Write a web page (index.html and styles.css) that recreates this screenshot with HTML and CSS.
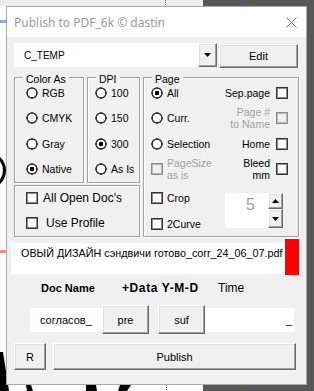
FILE: index.html
```html
<!DOCTYPE html>
<html>
	<head>
		<meta charset="utf-8">
		<title>Publish to PDF_6k</title>
		<link rel="stylesheet" href="styles.css">
	</head>
	<body>
		<div class="desk">
			<!-- what lies behind the dialog -->
			<svg class="backdrop" width="314" height="391">
				<rect width="314" height="391" fill="#fdfdfd"/>
				<rect x="0" y="0" width="203" height="6" fill="#ececec"/>
				<rect x="203" y="0" width="111" height="391" fill="#575757"/>
				<rect x="0" y="20" width="6" height="3" fill="#7fb2dd"/>
				<rect x="0" y="250" width="6" height="3" fill="#ef8b8b"/>
				<line x1="165.5" y1="0" x2="165.5" y2="6" stroke="#5a4fd0" stroke-dasharray="1 1"/>
				<line x1="241.5" y1="0" x2="241.5" y2="6" stroke="#5a4fd0" stroke-dasharray="1 1"/>
				<line x1="166.5" y1="385" x2="166.5" y2="391" stroke="#5a4fd0" stroke-dasharray="1 1"/>
				<line x1="242.5" y1="385" x2="242.5" y2="391" stroke="#5a4fd0" stroke-dasharray="1 1"/>
				<path d="M-1 158 A17 17 0 0 1 -1 183" stroke="#000" stroke-width="3" fill="none"/>
				<path d="M0 352 L3 352 L9 391 L0 391 Z" fill="#000"/>
				<path d="M26 385 L31 385 L33 391 L27 391 Z" fill="#000"/>
				<path d="M86 385 L96 385 L97 391 L86 391 Z" fill="#000"/>
				<path d="M120 385 L131 385 L127 391 L118 391 Z" fill="#000"/>
			</svg>

			<div class="win">
				<div class="titlebar">
					<span class="title">Publish to PDF_6k © dastin</span>
					<svg class="close" width="11" height="11" viewBox="0 0 11 11">
						<path d="M0.5 0.5 L10.5 10.5 M10.5 0.5 L0.5 10.5" stroke="#7a7a7a" stroke-width="1"/>
					</svg>
				</div>

				<div class="client">
					<div class="toprow">
						<div class="combo">
							<span class="combo-text">C_TEMP</span>
							<div class="btn drop">
								<svg width="7" height="4"><polygon points="0,0 7,0 3.5,4" fill="#000"/></svg>
							</div>
						</div>
						<div class="btn edit">Edit</div>
					</div>

					<div class="groups">
						<div class="group g-color">
							<span class="gtitle">Color As</span>
							<div class="rows">
								<div class="opt"><span class="radio"></span>RGB</div>
								<div class="opt"><span class="radio"></span>CMYK</div>
								<div class="opt"><span class="radio"></span>Gray</div>
								<div class="opt"><span class="radio on"></span>Native</div>
							</div>
						</div>

						<div class="group g-dpi">
							<span class="gtitle">DPI</span>
							<div class="rows">
								<div class="opt"><span class="radio"></span>100</div>
								<div class="opt"><span class="radio"></span>150</div>
								<div class="opt"><span class="radio on"></span>300</div>
								<div class="opt"><span class="radio"></span>As Is</div>
							</div>
						</div>

						<div class="group g-page">
							<span class="gtitle">Page</span>
							<div class="page-grid">
								<div class="opt"><span class="radio on"></span>All</div>
								<div class="ropt">Sep.page<span class="check"></span></div>

								<div class="opt"><span class="radio"></span>Curr.</div>
								<div class="ropt off"><span class="two">Page #<br>to Name</span><span class="check"></span></div>

								<div class="opt"><span class="radio"></span>Selection</div>
								<div class="ropt">Home<span class="check"></span></div>

								<div class="opt off"><span class="check"></span><span class="two">PageSize<br>as is</span></div>
								<div class="ropt"><span class="two">Bleed<br>mm</span><span class="check"></span></div>

								<div class="opt"><span class="check"></span>Crop</div>
								<div class="spin">
									<div class="spin-val">5</div>
									<div class="spin-btns">
										<div class="btn up"><svg width="7" height="4"><polygon points="0,4 7,4 3.5,0" fill="#000"/></svg></div>
										<div class="btn down"><svg width="7" height="4"><polygon points="0,0 7,0 3.5,4" fill="#000"/></svg></div>
									</div>
								</div>

								<div class="opt"><span class="check"></span>2Curve</div>
							</div>
						</div>

						<div class="group g-misc">
							<div class="misc-rows">
								<div class="opt big"><span class="check"></span>All Open Doc's</div>
								<div class="opt big"><span class="check"></span><span class="pad">Use Profile</span></div>
							</div>
						</div>
					</div>

					<div class="filerow">
						<div class="file">ОВЫЙ ДИЗАЙН сэндвичи готово_corr_24_06_07.pdf</div>
						<div class="flag"></div>
					</div>

					<div class="labels">
						<span class="lb-name">Doc Name</span>
						<span class="lb-date">+Data Y-M-D</span>
						<span class="lb-time">Time</span>
					</div>

					<div class="namerow">
						<div class="field f-pre">согласов_</div>
						<div class="btn small">pre</div>
						<div class="btn small suf">suf</div>
						<div class="field f-suf">_</div>
					</div>

					<div class="bottomrow">
						<div class="btn r">R</div>
						<div class="btn publish">Publish</div>
					</div>
				</div>
			</div>
		</div>
	</body>
</html>
```

FILE: styles.css
```css
*{
	margin: 0;
	padding: 0;
	box-sizing: border-box;
}
body{
	width: 314px;
	height: 391px;
	overflow: hidden;
	font-family: "Liberation Sans", Arial, sans-serif;
	font-size: 10.5px;
	color: #000;
	background: #fdfdfd;
}
.desk{
	position: relative;
	width: 314px;
	height: 391px;
}
.backdrop{
	position: absolute;
	left: 0;
	top: 0;
}
.win{
	position: absolute;
	left: 6px;
	top: 6px;
	width: 301px;
	height: 379px;
	border: 1px solid #a9a9a9;
	background: #f0f0f0;
	display: flex;
	flex-direction: column;
}
.titlebar{
	height: 30px;
	flex: none;
	background: #fff;
	display: flex;
	align-items: center;
	justify-content: space-between;
	padding: 0 9px 0 7px;
}
.title{
	font-family: "Noto Sans", "Open Sans", sans-serif;
	font-size: 12px;
	color: #9a9a9a;
}
.client{
	flex: 1;
	padding: 6px 7px 0 7px;
}

/* classic 3d button */
.btn{
	background: #f0f0f0;
	border: 1px solid;
	border-color: #fff #696969 #696969 #fff;
	box-shadow: inset -1px -1px #a0a0a0, inset 1px 1px #e3e3e3;
	display: flex;
	align-items: center;
	justify-content: center;
	font-size: 11px;
}
.btn svg{
	display: block;
}

.toprow{
	display: flex;
	gap: 2px;
	height: 25px;
}
.combo{
	width: 203px;
	height: 24px;
	background: #fff;
	display: flex;
	align-items: center;
	justify-content: space-between;
}
.combo-text{
	padding-left: 10px;
	font-size: 10px;
}
.drop{
	width: 19px;
	height: 24px;
}
.edit{
	width: 79px;
	height: 24px;
	margin-top: 1px;
}

/* group boxes */
.groups{
	display: grid;
	grid-template-columns: 70px 53px 156px;
	grid-template-rows: 106px 52px;
	column-gap: 3px;
	row-gap: 2px;
	margin-top: 9px;
}
.group{
	border: 1px solid #a0a0a0;
	box-shadow: inset 1px 1px #fff, 1px 1px #fff;
}
.g-page{
	grid-column: 3;
	grid-row: 1 / 3;
}
.g-misc{
	grid-column: 1 / 3;
	grid-row: 2;
}
.gtitle{
	display: block;
	width: max-content;
	margin: -5px 0 -7px 8px;
	padding: 0 3px;
	line-height: 12px;
	background: #f0f0f0;
}
.rows{
	display: grid;
	grid-template-rows: 24px 26px 25px 26px;
	padding-top: 3px;
}
.g-color .rows{
	padding-left: 11px;
}
.g-dpi .rows{
	padding-left: 7px;
}
.opt{
	display: flex;
	align-items: center;
	gap: 4px;
	white-space: nowrap;
}
.radio{
	flex: none;
	width: 12px;
	height: 12px;
	border-radius: 50%;
	background: radial-gradient(circle, #fff 4px, #333 4.5px 5.5px, transparent 6px);
}
.radio.on{
	background: radial-gradient(circle, #000 2px, #fff 2.6px 4px, #333 4.5px 5.5px, transparent 6px);
}
.check{
	flex: none;
	width: 12px;
	height: 12px;
	background: #fff;
	border: 1px solid #333;
	box-shadow: inset 0 0 0 1px #8a8a8a;
}
.off{
	color: #a0a0a0;
}
.off .check{
	background: #f0f0f0;
	border-color: #8c8c8c;
	box-shadow: inset 0 0 0 1px #b4b4b4;
}
.two{
	line-height: 12px;
}

.page-grid{
	display: grid;
	grid-template-columns: 1fr auto;
	grid-template-rows: 24px 26px 25px 26px 31px 21px;
	padding: 3px 10px 0 7px;
}
.ropt{
	display: flex;
	align-items: center;
	justify-content: flex-end;
	gap: 6px;
	text-align: right;
	white-space: nowrap;
}
.spin{
	grid-column: 2;
	grid-row: 5 / 7;
	align-self: start;
	margin-top: 11px;
	display: flex;
}
.spin-val{
	width: 43px;
	height: 35px;
	background: #fff;
	color: #a0a0a0;
	font-size: 16px;
	line-height: 18px;
	padding: 3px 0 0 21px;
}
.spin-btns{
	width: 15px;
	display: flex;
	flex-direction: column;
}
.up{
	height: 16px;
}
.down{
	height: 19px;
}

.misc-rows{
	display: grid;
	grid-template-rows: 24px 26px;
	padding-left: 11px;
}
.big{
	font-size: 12px;
	gap: 5px;
}
.pad{
	padding-left: 3px;
}

.filerow{
	display: flex;
	height: 36px;
	margin: 2px 0 0 -3px;
}
.file{
	width: 275px;
	height: 31px;
	margin-top: 4px;
	background: #fff;
	font-size: 10.8px;
	line-height: 14px;
	padding: 3px 0 0 10px;
	white-space: nowrap;
	overflow: hidden;
}
.flag{
	width: 14px;
	height: 36px;
	background: #ff0000;
}

.labels{
	display: grid;
	grid-template-columns: 81px 96px auto;
	margin-top: 6px;
	padding-left: 27px;
	height: 14px;
	line-height: 14px;
}
.lb-name{
	font-weight: bold;
	font-size: 11px;
}
.lb-date{
	font-weight: bold;
	font-size: 12px;
	letter-spacing: 0.6px;
}
.lb-time{
	font-size: 12px;
}

.namerow{
	display: flex;
	align-items: center;
	height: 29px;
	margin-top: 10px;
	padding-left: 16px;
}
.field{
	height: 24px;
	background: #fff;
	font-size: 11px;
	line-height: 24px;
	white-space: nowrap;
}
.f-pre{
	width: 72px;
	padding-left: 10px;
}
.f-suf{
	width: 89px;
	text-align: right;
	padding-right: 2px;
}
.small{
	width: 47px;
	height: 29px;
}
.suf{
	margin-left: 9px;
}

.bottomrow{
	display: flex;
	gap: 7px;
	height: 27px;
	margin-top: 9px;
}
.r{
	width: 32px;
}
.publish{
	width: 243px;
}
```
